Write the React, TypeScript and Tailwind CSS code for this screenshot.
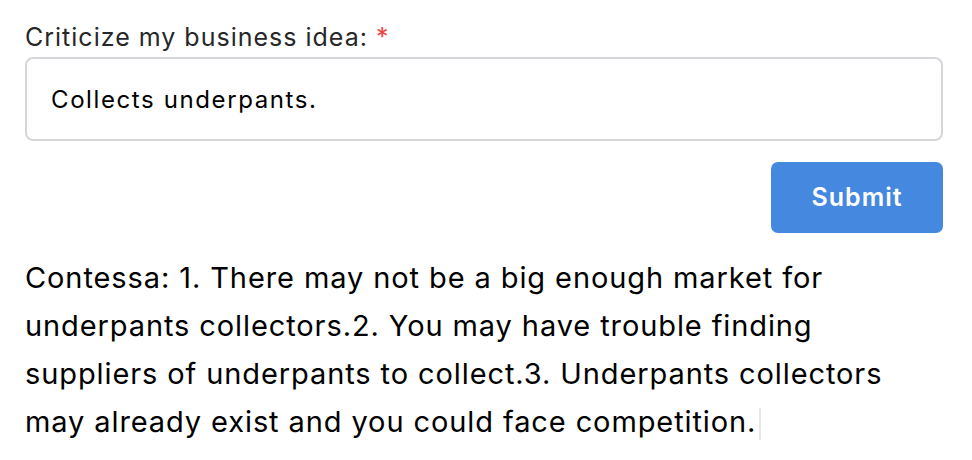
import { useState } from "react";

export default function App() {
  const [idea, setIdea] = useState("Collects underpants.");

  return (
    <div className="w-[972px] h-[460px] bg-white pl-[25px] pr-[29px] pt-[18px] font-['Inter',sans-serif]">
      <label className="block text-[25px] leading-[38px] tracking-[1px] text-[#27272a]">
        Criticize my business idea: <span className="text-[#ef4444]">*</span>
      </label>
      <input
        value={idea}
        onChange={(e) => setIdea(e.target.value)}
        className="mt-[1px] block w-full h-[84px] rounded-[8px] border-2 border-[#d4d6d9] px-[24px] text-[24px] tracking-[1.6px] text-black outline-none"
      />
      <div className="flex justify-end mt-[21px]">
        <button className="w-[172px] h-[71px] rounded-[7px] bg-[#4588e0] text-[25px] font-semibold tracking-[1px] text-white">
          Submit
        </button>
      </div>
      <p className="mt-[21px] text-[29px] leading-[48px] tracking-[0.9px] text-black">
        Contessa: 1. There may not be a big enough market for underpants collectors.2. You may have trouble finding
        suppliers of underpants to collect.3. Underpants collectors may already exist and you could face competition.
        <span className="inline-block w-[2px] h-[32px] bg-[#e5e7eb] align-middle ml-[3px]" />
      </p>
    </div>
  );
}
